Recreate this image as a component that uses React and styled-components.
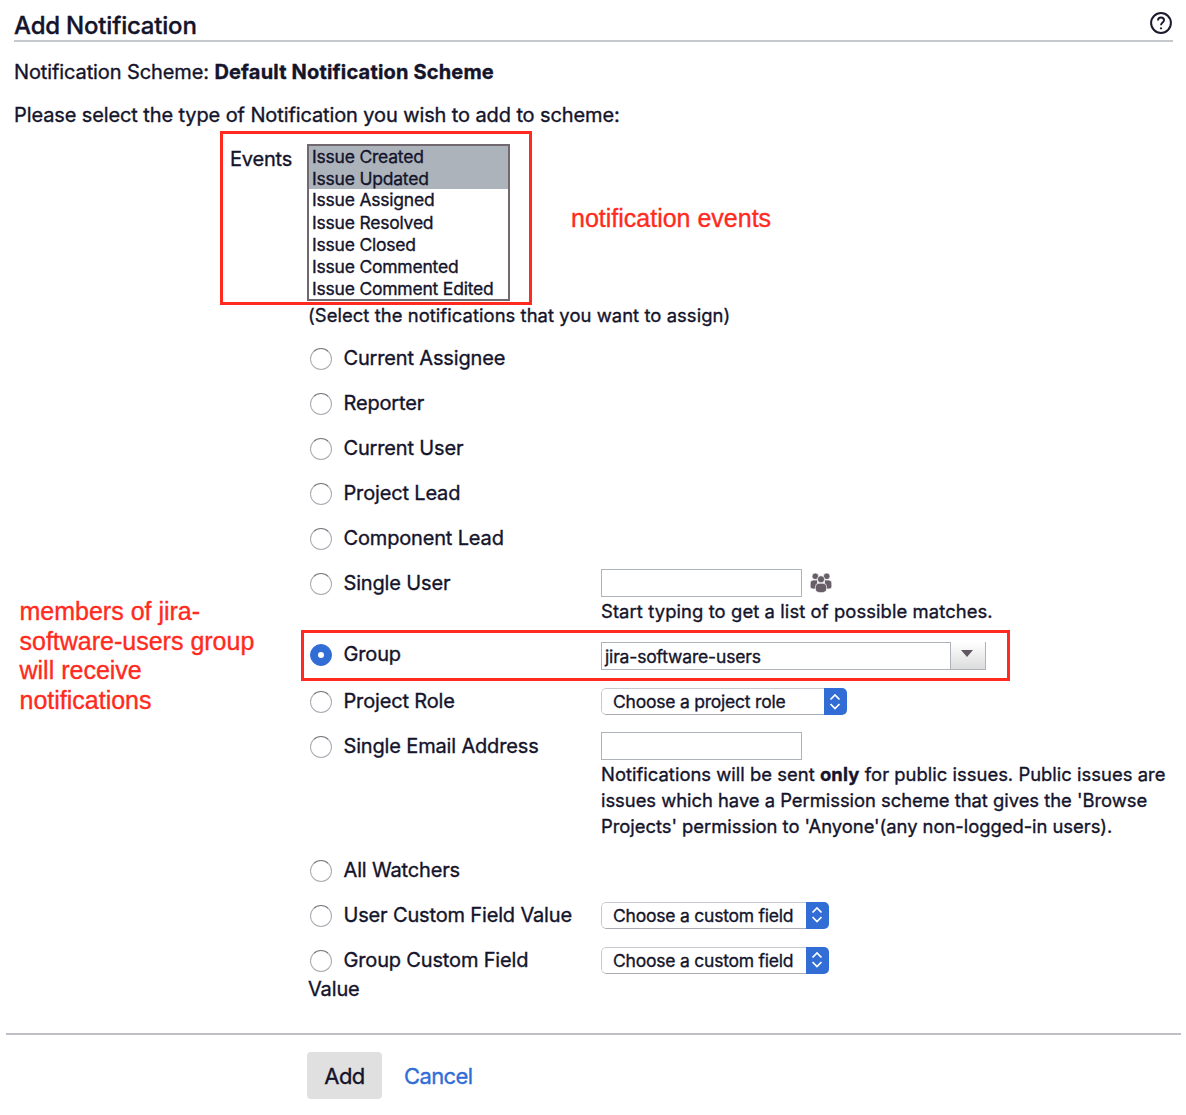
import React from 'react';
import styled, { createGlobalStyle } from 'styled-components';

const Global = createGlobalStyle`
  * { box-sizing: border-box; }
  body { margin: 0; background: #fff; }
`;

const RED = '#ff2a20';
const BLUE = '#326dd6';

const Page = styled.main`
  width: 1186px;
  height: 1115px;
  overflow: hidden;
  background: #fff;
  color: #14142b;
  font-family: Inter, "Liberation Sans", sans-serif;
  font-size: 20px;
  -webkit-text-stroke: 0.35px currentColor;
`;
const Header = styled.header`
  display: flex;
  justify-content: space-between;
  align-items: flex-start;
  height: 42px;
  margin: 0 13px 0 14px;
  padding-top: 10px;
  border-bottom: 2px solid #c5c8cc;
`;
const Title = styled.h1`
  margin: 1px 0 0;
  font-size: 24px;
  line-height: 30px;
  font-weight: 500;
  letter-spacing: -0.2px;
  white-space: nowrap;
`;
const HelpIcon = styled.svg`
  width: 24px;
  height: 24px;
  margin-top: 1px;
`;
const Intro = styled.p`
  margin: ${p => p.$top}px 0 0 14px;
  line-height: 30px;
  white-space: nowrap;
  letter-spacing: -0.11px;
`;
const Bold = styled.strong`
  font-weight: 700;
  letter-spacing: 0.18px;
`;
const EventsRow = styled.section`
  display: flex;
  align-items: center;
  gap: 39px;
  margin: 1px 0 0 220px;
`;
const EventsBox = styled.div`
  display: flex;
  width: 312px;
  height: 174px;
  border: 3px solid ${RED};
  padding: 10px 0 0 7px;
`;
const EventsLabel = styled.span`
  width: 77px;
  line-height: 30px;
  letter-spacing: -0.2px;
`;
const ListBox = styled.ul`
  list-style: none;
  margin: 0;
  padding: 0;
  width: 203px;
  height: 157px;
  border: 2px solid #716870;
`;
const Option = styled.li`
  height: ${p => p.$h || 22}px;
  line-height: 22px;
  padding-left: 3px;
  font-size: 17.5px;
  letter-spacing: -0.21px;
  white-space: nowrap;
  background: ${p => (p.$selected ? '#adb3bb' : '#fff')};
`;
const Note = styled.p`
  margin: ${p => p.$top || 0}px 0 0;
  color: ${RED};
  font-family: "Liberation Sans", Arial, sans-serif;
  font-size: 25px;
  line-height: 29.5px;
  white-space: nowrap;
`;
const Body = styled.section`
  display: grid;
  grid-template-columns: 300px 1fr;
`;
const Side = styled.aside`
  padding: 292px 0 0 19.5px;
`;
const Hint = styled.p`
  margin: 0;
  font-size: 18.4px;
  line-height: 26.4px;
  white-space: nowrap;
  letter-spacing: ${p => p.$ls || 0}px;
`;
const ListHint = styled(Hint)`
  padding: 0 0 0 8px;
  height: 31px;
  line-height: 20px;
`;
const Row = styled.div`
  display: grid;
  grid-template-columns: 293px 1fr;
  height: ${p => p.$h || 45}px;
  padding: ${p => p.$top ?? 8}px 0 0 8px;
`;
const GroupRow = styled(Row)`
  width: 709px;
  height: 51px;
  margin-left: 1px;
  border: 3px solid ${RED};
  padding: 7px 0 0 4px;
`;
const Choice = styled.label`
  line-height: 29px;
  white-space: nowrap;
  letter-spacing: -0.16px;
`;
const Radio = styled.span`
  display: inline-flex;
  align-items: center;
  justify-content: center;
  width: 22px;
  height: 22px;
  margin: -1px 11.5px 0 2px;
  vertical-align: middle;
  border: 1.5px solid #a9adb3;
  border-top-color: #77747c;
  border-radius: 50%;
  ${p => p.$on && `border-color: ${BLUE}; background: ${BLUE};`}
  &::after {
    content: '';
    display: ${p => (p.$on ? 'block' : 'none')};
    width: 6px;
    height: 6px;
    border-radius: 50%;
    background: #fff;
  }
`;
const Line = styled.div`
  display: flex;
  align-items: center;
  gap: 8px;
  height: 28px;
  margin-bottom: 1px;
`;
const Input = styled.div`
  width: 201px;
  height: 28px;
  border: 1px solid #aeb3bb;
`;
const Combo = styled.div`
  display: flex;
  width: 385px;
  height: 28px;
  margin-top: 2px;
  border: 1px solid #aeb3bb;
  font-size: 17.5px;
  line-height: 28px;
`;
const ComboText = styled.span`
  flex: 1;
  padding-left: 3px;
  letter-spacing: -0.16px;
`;
const ComboButton = styled.span`
  display: flex;
  justify-content: center;
  width: 35px;
  margin-top: -1px;
  padding: 8px 2px 0 0;
  border-left: 1px solid #aeb3bb;
  background: linear-gradient(#fff, #dcdcdc);
`;
const Select = styled.div`
  display: flex;
  width: ${p => p.$w}px;
  height: 27px;
  margin-top: 1px;
  overflow: hidden;
  border-radius: 5px;
  font-size: 17.5px;
`;
const SelectText = styled.span`
  flex: 1;
  padding-left: 11px;
  line-height: 25px;
  border: 1px solid #c6c9cd;
  border-bottom-color: #a9adb3;
  border-right: 0;
  border-radius: 5px 0 0 5px;
  white-space: nowrap;
  letter-spacing: -0.22px;
`;
const Stepper = styled.span`
  display: flex;
  align-items: center;
  justify-content: center;
  width: 23px;
  padding-right: 1px;
  background: ${BLUE};
`;
const Footer = styled.footer`
  display: flex;
  align-items: center;
  gap: 22px;
  margin: 0 5px 0 6px;
  padding: 17px 0 0 301px;
  border-top: 2px solid #bfc0c7;
  font-size: 22px;
  letter-spacing: -0.6px;
`;
const AddButton = styled.button`
  width: 75px;
  height: 47px;
  padding: 0;
  border: 0;
  border-radius: 4px;
  background: #e0e0e0;
  color: inherit;
  font: inherit;
  letter-spacing: inherit;
`;
const Cancel = styled.a`
  color: ${BLUE};
`;

const RadioOption = ({ on, children }) => (
  <Choice><Radio $on={on} />{children}</Choice>
);

const Dropdown = ({ w, children }) => (
  <Select $w={w}>
    <SelectText>{children}</SelectText>
    <Stepper>
      <svg width="12" height="18" viewBox="0 0 12 18" fill="none" stroke="#fff" strokeWidth="1.7">
        <path d="M1.500 6.500 6 2l4.500 4.500M1.500 11 6 15.500l4.500-4.500" />
      </svg>
    </Stepper>
  </Select>
);

const People = () => (
  <svg width="22" height="20" viewBox="0 0 22 20" fill="#675e67" stroke="#fff" strokeWidth=".7">
    <circle cx="5.300" cy="3.300" r="3.300" />
    <circle cx="16.700" cy="3.300" r="3.300" />
    <path d="M3.500 7h4v9H3Q.2 16 .2 13.500V10Q.2 7 3.500 7Z" />
    <path d="M18.500 7h-4v9H19q2.800 0 2.800-2.500V10q0-3-3.300-3Z" />
    <circle cx="11" cy="6.300" r="3.600" />
    <path d="M9 10.200h4q3.600 0 3.600 3.600v2q0 3.900-5.600 3.900t-5.600-3.900v-2q0-3.600 3.600-3.600Z" />
  </svg>
);

export default function App() {
  return (
    <Page>
      <Global />
      <Header>
        <Title>Add Notification</Title>
        <HelpIcon viewBox="0 0 24 24" fill="none" stroke="#1c1a2c">
          <circle cx="12" cy="12" r="9.900" strokeWidth="2" />
          <path d="M9 9.500C9 7.700 10.200 6.500 12 6.500s3 1.100 3 2.700c0 2.300-3 2.400-3 5" strokeWidth="1.900" />
          <circle cx="12" cy="17.300" r=".5" strokeWidth="1.200" />
        </HelpIcon>
      </Header>
      <Intro $top={15}>Notification Scheme: <Bold>Default Notification Scheme</Bold></Intro>
      <Intro $top={13}>Please select the type of Notification you wish to add to scheme:</Intro>
      <EventsRow>
        <EventsBox>
          <EventsLabel>Events</EventsLabel>
          <ListBox>
            <Option $selected>Issue Created</Option>
            <Option $selected $h={21}>Issue Updated</Option>
            <Option $h={23}>Issue Assigned</Option>
            <Option>Issue Resolved</Option>
            <Option>Issue Closed</Option>
            <Option $h={21.5}>Issue Commented</Option>
            <Option $h={21}>Issue Comment Edited</Option>
          </ListBox>
        </EventsBox>
        <Note $top={2}>notification events</Note>
      </EventsRow>
      <Body>
        <Side>
          <Note>members of jira-<br />software-users group<br />will receive<br />notifications</Note>
        </Side>
        <div>
          <ListHint $ls={0.07}>(Select the notifications that you want to assign)</ListHint>
          <Row><RadioOption>Current Assignee</RadioOption></Row>
          <Row><RadioOption>Reporter</RadioOption></Row>
          <Row><RadioOption>Current User</RadioOption></Row>
          <Row><RadioOption>Project Lead</RadioOption></Row>
          <Row><RadioOption>Component Lead</RadioOption></Row>
          <Row $h={69}>
            <RadioOption>Single User</RadioOption>
            <div>
              <Line><Input /><People /></Line>
              <Hint $ls={0.1}>Start typing to get a list of possible matches.</Hint>
            </div>
          </Row>
          <GroupRow>
            <RadioOption on>Group</RadioOption>
            <Combo>
              <ComboText>jira-software-users</ComboText>
              <ComboButton>
                <svg width="12" height="7" viewBox="0 0 12 7"><path d="M0 0h12L6 7Z" fill="#605860" /></svg>
              </ComboButton>
            </Combo>
          </GroupRow>
          <Row $top={6} $h={42.5}>
            <RadioOption>Project Role</RadioOption>
            <Dropdown w={246}>Choose a project role</Dropdown>
          </Row>
          <Row $h={124}>
            <RadioOption>Single Email Address</RadioOption>
            <div>
              <Line><Input /></Line>
              <Hint $ls={0.03}>Notifications will be sent <Bold>only</Bold> for public issues. Public issues are</Hint>
              <Hint $ls={-0.02}>issues which have a Permission scheme that gives the 'Browse</Hint>
              <Hint $ls={-0.02}>Projects' permission to 'Anyone'(any non-logged-in users).</Hint>
            </div>
          </Row>
          <Row><RadioOption>All Watchers</RadioOption></Row>
          <Row>
            <RadioOption>User Custom Field Value</RadioOption>
            <Dropdown w={228}>Choose a custom field</Dropdown>
          </Row>
          <Row $h={95.5}>
            <RadioOption>Group Custom Field<br />Value</RadioOption>
            <Dropdown w={228}>Choose a custom field</Dropdown>
          </Row>
        </div>
      </Body>
      <Footer>
        <AddButton>Add</AddButton>
        <Cancel>Cancel</Cancel>
      </Footer>
    </Page>
  );
}
